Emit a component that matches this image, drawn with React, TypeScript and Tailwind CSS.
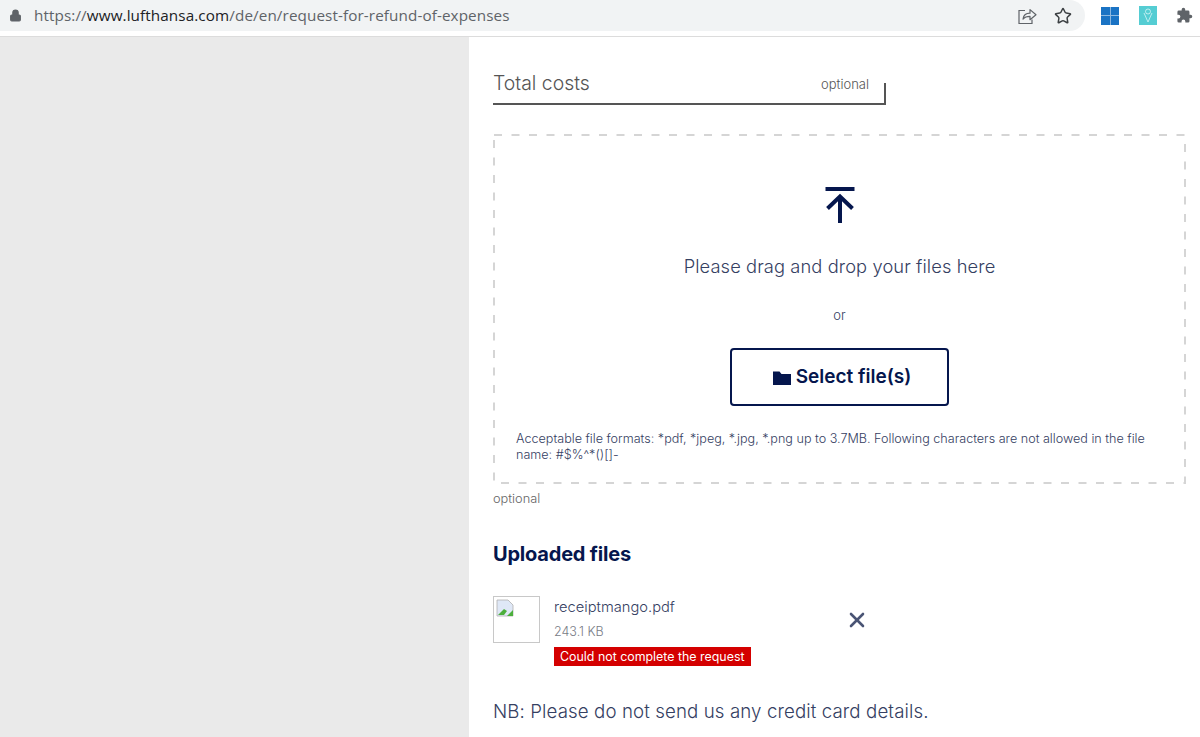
import { Lock, Star, X } from "lucide-react"

function ShareIcon() {
  return (
    <svg width="20" height="18" viewBox="0 0 20 18" fill="none" stroke="#5f6368" strokeWidth="1.2">
      <path d="M8 3.500H2v13h13v-4" />
      <path d="M6 12c.6-3.800 3.400-5.800 7-5.800V2.600L19 7.700l-6 5V9.300c-3 0-5.300.6-7 2.700z" strokeLinejoin="round" />
    </svg>
  )
}

function PuzzleIcon() {
  return (
    <svg width="17" height="17" viewBox="0 0 24 24" fill="#5f6368">
      <path d="M20.500 11H19V7a2 2 0 0 0-2-2h-4V3.500a2.500 2.500 0 0 0-5 0V5H4a2 2 0 0 0-2 2v3.800h1.500a2.700 2.700 0 0 1 0 5.400H2V20a2 2 0 0 0 2 2h3.800v-1.500a2.700 2.700 0 0 1 5.400 0V22H17a2 2 0 0 0 2-2v-4h1.500a2.500 2.500 0 0 0 0-5z" />
    </svg>
  )
}

function FolderIcon() {
  return (
    <svg width="18" height="14" viewBox="0 0 18 14" fill="#05164d">
      <path d="M0 0.500h6.500l2 2.500H18v11H0z" />
    </svg>
  )
}

function TopBar() {
  return (
    <div className="flex h-[37px] items-start border-b border-[#dcdcdc] bg-white">
      <div className="flex h-[31px] w-[1085px] items-center rounded-r-[16px] bg-[#f1f3f4] pl-[9px] pr-[13px]">
        <Lock size={13} fill="#5f6368" stroke="#5f6368" strokeWidth={2} />
        <div className="ml-[12px] flex-1 font-['Open_Sans',sans-serif] text-[15.25px] leading-[31px] tracking-[0.1px] text-[#5f6368]">
          https://<span className="text-[#202124]">www.lufthansa.com</span>/de/en/request-for-refund-of-expenses
        </div>
        <div className="flex items-center gap-[17px]">
          <ShareIcon />
          <Star size={18} stroke="#3c4043" strokeWidth={2} />
        </div>
      </div>
      <div className="flex h-[31px] flex-1 items-center pl-[16px]">
        <div className="grid h-[18px] w-[18px] grid-cols-2 gap-px bg-[#8db8e0]">
          <div className="bg-[#1a73c4]" />
          <div className="bg-[#1a73c4]" />
          <div className="bg-[#1a73c4]" />
          <div className="bg-[#1a73c4]" />
        </div>
        <div className="ml-[20px] flex h-[19px] w-[18px] items-center justify-center bg-[#55cdd3]">
          <svg width="10" height="15" viewBox="0 0 10 15" fill="none" stroke="#d8f5f6" strokeWidth="0.8">
            <path d="M1 5l4 9 4-9" />
            <circle cx="5" cy="3.500" r="2.500" />
          </svg>
        </div>
        <div className="ml-[19px]">
          <PuzzleIcon />
        </div>
      </div>
    </div>
  )
}

function DropZone() {
  return (
    <div className="relative mt-[29px] h-[350px] w-[693px]">
      <svg className="absolute inset-0" width="693" height="350" fill="none">
        <rect x="1" y="1" width="691" height="348" stroke="#d5d5d5" strokeWidth="2" strokeDasharray="8 9.500" />
      </svg>
      <div className="flex h-full flex-col items-center pt-[53px]">
        <svg width="30" height="36" viewBox="0 0 30 36" fill="none" stroke="#05164d" strokeWidth="4">
          <path d="M0.500 2h29" />
          <path d="M15 36V11" />
          <path d="M2.500 21.500L15 9.500l12.500 12" />
        </svg>
        <p className="mt-[29px] text-[18.3px] font-light leading-[28px] tracking-[0.1px] text-[#354062]">
          Please drag and drop your files here
        </p>
        <p className="mt-[25px] text-[13px] font-light leading-[20px] text-[#354062]">or</p>
        <button className="mt-[23px] flex h-[58px] w-[219px] items-center justify-center gap-[5px] rounded-[4px] border-2 border-[#05164d] pl-[5px] pt-[1px] text-[19px] font-semibold text-[#05164d]">
          <FolderIcon />
          Select file(s)
        </button>
        <p className="mt-[25px] w-full pl-[23px] pr-[30px] text-[12.6px] font-light leading-[16px] text-[#354062]">
          Acceptable file formats: *pdf, *jpeg, *.jpg, *.png up to 3.7MB. Following characters are not allowed in the file name: #$%^*()[]-
        </p>
      </div>
    </div>
  )
}

function UploadedFile() {
  return (
    <div className="mt-[28px] flex items-start">
      <div className="h-[47px] w-[47px] border border-[#c8c8c8] p-[2px]">
        <svg width="18" height="18" viewBox="0 0 18 18">
          <path d="M1 1h11l5 5v11H1z" fill="#dfe8f7" stroke="#b0b0b0" strokeWidth="0.8" />
          <path d="M2 16l6-6 3 2-3 4z" fill="#4caf3c" />
          <path d="M11 17l6-6v6z" fill="#4caf3c" />
        </svg>
      </div>
      <div className="ml-[14px] w-[198px]">
        <p className="text-[14.7px] font-light leading-[22px] text-[#354062]">receiptmango.pdf</p>
        <p className="mt-[4px] text-[12.5px] font-light leading-[20px] text-[#777b85]">243.1 KB</p>
        <p className="mt-[5px] inline-block whitespace-nowrap bg-[#d40000] px-[6px] text-[12.4px] leading-[19px] text-white">
          Could not complete the request
        </p>
      </div>
      <button className="ml-[93px] mt-[12px] text-[#4a5474]">
        <X size={24} strokeWidth={2.600} />
      </button>
    </div>
  )
}

export default function App() {
  return (
    <div className="h-[737px] w-[1200px] overflow-hidden bg-white font-['Inter',sans-serif]">
      <TopBar />
      <div className="flex h-[700px]">
        <div className="w-[469px] bg-[#eaeaea]" />
        <div className="flex-1 pl-[24px]">
          <div className="mt-[30px] flex h-[38px] w-[393px] items-start justify-between border-b-[2px] border-r-[2px] border-[#555555] [border-image:linear-gradient(to_bottom,transparent_44%,#555555_44%)_1]">
            <span className="text-[19.4px] font-light leading-[32px] text-[#555555]">Total costs</span>
            <span className="mr-[15px] mt-[1px] text-[13px] font-light leading-[32px] text-[#555555]">optional</span>
          </div>
          <DropZone />
          <p className="mt-[6px] text-[12.8px] font-light leading-[18px] text-[#666666]">optional</p>
          <h2 className="mt-[32px] text-[20px] font-bold leading-[28px] tracking-[-0.2px] text-[#05164d]">Uploaded files</h2>
          <UploadedFile />
          <p className="mt-[31px] text-[18.7px] font-light leading-[28px] tracking-[0.1px] text-[#354062]">
            NB: Please do not send us any credit card details.
          </p>
        </div>
      </div>
    </div>
  )
}
